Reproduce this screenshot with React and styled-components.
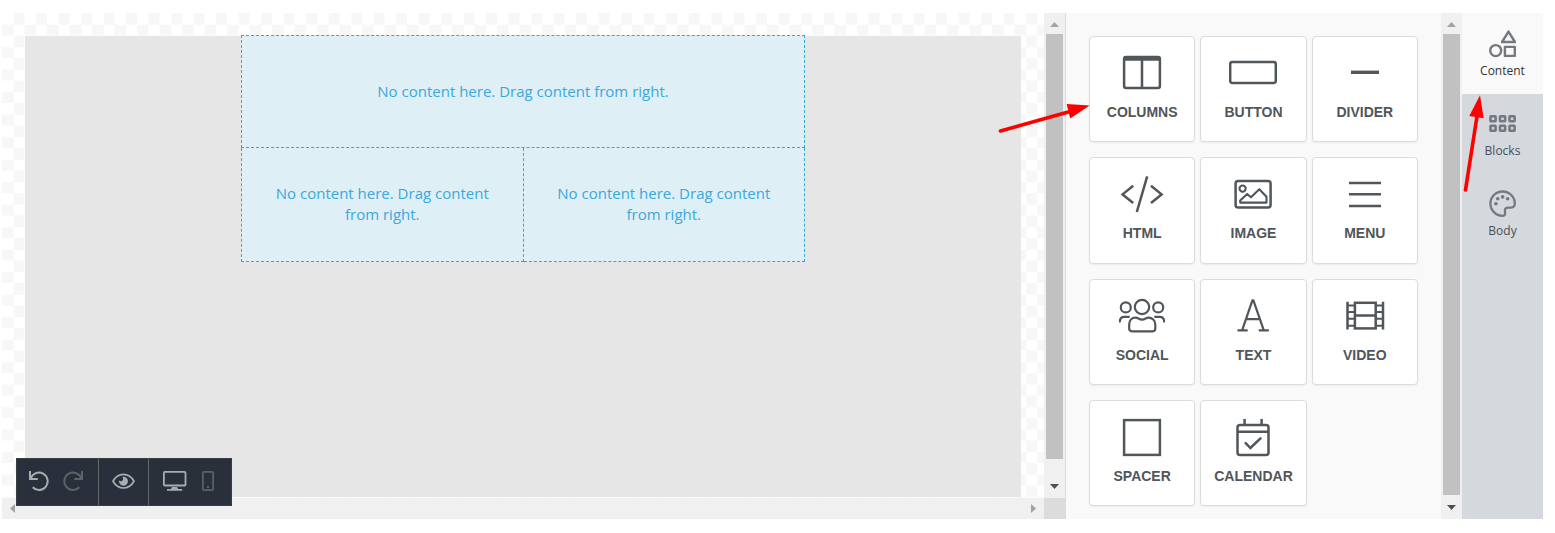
import { useState } from "react";
import styled, { createGlobalStyle, css } from "styled-components";

const GlobalStyle = createGlobalStyle`
  *, *::before, *::after {
    box-sizing: border-box;
  }

  body {
    margin: 0;
    background: #fff;
    font-family: "Open Sans", sans-serif;
  }

  button {
    margin: 0;
    padding: 0;
    border: none;
    background: none;
    font: inherit;
    color: inherit;
    cursor: pointer;
  }
`;

const Page = styled.div`
  min-height: 100vh;
  padding: 13px 12px 14px 2px;
  display: flex;
`;

const Editor = styled.div`
  position: relative;
  flex: 1;
  display: flex;
`;

const Preview = styled.main`
  flex: 1;
  min-width: 0;
  display: grid;
  grid-template-columns: 1fr 21px;
  grid-template-rows: 1fr 21px;
  border-right: 1px solid #dcdcdc;
`;

const Canvas = styled.div`
  padding: 23px 23px 1px;
  display: flex;
  background: conic-gradient(#f7f7f7 25%, #fff 0 50%, #f7f7f7 0 75%, #fff 0) 0 0 /
    calc(45px / 2) calc(45px / 2);
`;

const Sheet = styled.div`
  flex: 1;
  background: #e6e6e6;
`;

const Layout = styled.div`
  max-width: 564px;
  margin: -1px auto 0;
`;

const LayoutRow = styled.div`
  display: flex;
`;

const DropZone = styled.div`
  flex: 1;
  min-height: ${(props) => (props.$first ? "113px" : "114px")};
  padding: ${(props) => (props.$first ? "0 24px" : "0 24px 2px")};
  display: flex;
  align-items: center;
  justify-content: center;
  text-align: center;
  font-size: 15px;
  line-height: 21px;
  color: #3aa8dd;
  background: #dfeff6;
  border: 1px dashed #30aadc;
  border-width: ${(props) => (props.$first ? "1px 1px 1px 0" : "0 1px 1px 0")};

  &:first-child {
    border-left-width: 1px;
  }
`;

const Track = styled.div`
  display: flex;
  flex-direction: ${(props) => (props.$horizontal ? "row" : "column")};
  ${(props) => !props.$horizontal && "width: 21px;"}
  background: #f0f0f0;
`;

const ArrowBox = styled.span`
  width: 21px;
  height: 21px;
  display: flex;
  align-items: center;
  justify-content: center;
  color: ${(props) => (props.$active ? "#505050" : "#a3a3a3")};
`;

const Thumb = styled.div`
  flex: 1;
  margin: 0 2px ${(props) => props.$rest || 0}px;
  background: ${(props) => (props.$hidden ? "transparent" : "#c1c1c1")};
`;

const Corner = styled.div`
  background: #dcdcdc;
`;

const Panel = styled.aside`
  position: relative;
  width: 396px;
  display: flex;
  background: #f9f9f9;
`;

const Tools = styled.div`
  flex: 1;
  padding: 23px 23px 13px;
  display: grid;
  grid-template-columns: repeat(3, 1fr);
  grid-template-rows: repeat(4, 1fr);
  gap: 15px 5px;
`;

const ToolCard = styled.button`
  padding: 16px 0 18px;
  display: flex;
  flex-direction: column;
  align-items: center;
  gap: 9px;
  background: #fff;
  border: 1px solid #dcdcdc;
  border-radius: 4px;
  box-shadow: 0 1px 2px rgba(0, 0, 0, 0.06);
  color: #505659;
  cursor: grab;
`;

const ToolLabel = styled.span`
  font-family: "Liberation Sans", Arial, sans-serif;
  font-size: 14px;
  font-weight: 700;
  line-height: 20px;
`;

const Tabs = styled.nav`
  position: relative;
  width: 81px;
  background: #d5d8dc;
`;

const Tab = styled.button`
  width: 100%;
  padding: 17px 0 14px;
  display: flex;
  flex-direction: column;
  align-items: center;
  gap: 5px;
  font-size: 12px;
  line-height: 16px;
  color: #4a4f57;

  svg {
    color: #75787e;
  }

  ${(props) =>
    props.$active &&
    css`
      color: #333;
      background: #f9f9f9;
      box-shadow: 0 1px 0 #f9f9f9;
    `}
`;

const Toolbar = styled.div`
  position: absolute;
  left: 14px;
  bottom: 13px;
  height: 48px;
  display: flex;
  background: #2a303b;
  border: 1px solid #3b3d41;
`;

const ToolbarGroup = styled.div`
  display: flex;
  align-items: center;
  gap: ${(props) => props.$gap || 0}px;
  padding: ${(props) => props.$pad};

  & + & {
    border-left: 1px solid #66686a;
  }
`;

const IconButton = styled.button`
  display: flex;
  color: ${(props) => (props.$dim ? "#5f6266" : "#a9acb1")};
`;

const Pointer = styled.svg`
  position: absolute;
  z-index: 2;
  pointer-events: none;
  left: ${(props) => props.$left}px;
  top: ${(props) => props.$top}px;
`;

function ToolIcon({ children }) {
  return (
    <svg
      width="48"
      height="40"
      viewBox="0 0 48 40"
      fill="none"
      stroke="currentColor"
      strokeWidth="2.5"
      aria-hidden="true"
    >
      {children}
    </svg>
  );
}

const tools = [
  {
    label: "COLUMNS",
    icon: (
      <>
        <rect x="6.1" y="4.1" width="35.8" height="30.8" rx="2" />
        <path d="M6 5.6h36" strokeWidth="4.4" />
        <path d="M24 6v29" />
      </>
    ),
  },
  {
    label: "BUTTON",
    icon: <rect x="1.2" y="9.1" width="45.6" height="20.8" rx="2" />,
  },
  {
    label: "DIVIDER",
    icon: <path d="M10 19.3h28" strokeWidth="3.4" />,
  },
  {
    label: "HTML",
    icon: (
      <path d="M15.2 11.8L4.6 20.4l10.6 8.6M29.2 2.4L18.8 38M33 11.8l10.6 8.6L33 29" />
    ),
  },
  {
    label: "IMAGE",
    icon: (
      <>
        <rect x="6.6" y="7" width="35" height="26.6" rx="2.5" />
        <circle cx="13.6" cy="14.6" r="3.1" strokeWidth="2.1" />
        <path
          d="M11.2 28.6v-2l7-6.6 3.8 3.2 8.3-8 7.2 7.6v5.8z"
          strokeWidth="2.1"
          strokeLinejoin="round"
        />
      </>
    ),
  },
  {
    label: "MENU",
    icon: <path d="M8 9h32M8 20.3h32M8 32h32" />,
  },
  {
    label: "SOCIAL",
    icon: (
      <g strokeWidth="2.2" strokeLinecap="round">
        <circle cx="24" cy="11" r="7.2" />
        <circle cx="7.8" cy="11.4" r="5" />
        <circle cx="40.2" cy="11.4" r="5" />
        <path d="M11.2 32.6v-4.2c0-4 2.6-6.8 6.4-6.8 2.6 0 3.2 2 6.4 2s3.8-2 6.4-2c3.8 0 6.9 2.8 6.9 6.8v4.2c0 1.7-1 2.7-2.7 2.7H13.9c-1.7 0-2.7-1-2.7-2.7z" />
        <path d="M1.9 25.6c0-3 1.6-4.8 4.4-4.8h4.6M46.1 25.6c0-3-1.6-4.8-4.4-4.8h-4.6" />
      </g>
    ),
  },
  {
    label: "TEXT",
    icon: (
      <path
        d="M13.2 34.2L23.4 4.3h1L34.7 34.2M17.5 23.2h13M9.4 34.4h8.4M30.6 34.4H39"
        strokeWidth="2.2"
        strokeLinecap="round"
        strokeLinejoin="round"
      />
    ),
  },
  {
    label: "VIDEO",
    icon: (
      <>
        <rect x="13.9" y="6.8" width="20.8" height="25.6" />
        <path d="M14 19.4h21M6.5 5.8v27.6M42 5.8v27.6" />
        <path
          d="M6.5 9.4H14M6.5 16H14M6.5 22.8H14M6.5 29.8H14M35 9.4h7M35 16h7M35 22.8h7M35 29.8h7"
          strokeWidth="2"
        />
      </>
    ),
  },
  {
    label: "SPACER",
    icon: <rect x="6.1" y="3.1" width="35.8" height="34.8" />,
  },
  {
    label: "CALENDAR",
    icon: (
      <>
        <rect x="8.5" y="8" width="31" height="29.9" rx="2.5" />
        <path d="M8.5 14.8h31M15.6 2v6M32.6 2v6" />
        <path d="M16.7 26.2l4.7 4.8L31.5 21.4" strokeLinecap="round" />
      </>
    ),
  },
];

const tabs = [
  {
    label: "Content",
    icon: (
      <g strokeWidth="2.4" strokeLinejoin="round">
        <path d="M19.5 1.6L26 12H13z" />
        <circle cx="6.7" cy="20.6" r="5.5" />
        <rect x="15.9" y="16.9" width="9.9" height="9" />
      </g>
    ),
  },
  {
    label: "Blocks",
    icon: (
      <g strokeWidth="2.6">
        {[1.5, 11, 20.5].map((x) => (
          <g key={x}>
            <rect x={x} y="6.2" width="5.1" height="5.1" rx="0.5" />
            <rect x={x} y="15.7" width="5.1" height="5.1" rx="0.5" />
          </g>
        ))}
      </g>
    ),
  },
  {
    label: "Body",
    icon: (
      <>
        <path
          d="M13.6 1.5C6.8 1.5 1.4 6.9 1.4 13.6c0 6.6 5.3 12.2 12 12.2 2 0 3-1.3 2.7-3-.3-2-.6-3.1.2-4.1 1-1.2 2.5-1.1 4.500-1 3 .2 5-1.1 5-4.1 0-6.700-5.400-12.100-12.200-12.100z"
          strokeWidth="2.3"
        />
        <g fill="currentColor" stroke="none">
          <circle cx="6.9" cy="13.7" r="1.8" />
          <circle cx="8.7" cy="8.8" r="1.8" />
          <circle cx="13.6" cy="6.9" r="1.8" />
          <circle cx="18.6" cy="8.8" r="1.8" />
        </g>
      </>
    ),
  },
];

const arrowPaths = {
  up: "M1 9L5.5 4 10 9z",
  down: "M1 2h9L5.5 7z",
  left: "M8 1v9L3 5.5z",
  right: "M3 1v9l5-4.5z",
};

function ScrollArrow({ direction, active }) {
  return (
    <ArrowBox $active={active}>
      <svg width="11" height="11" viewBox="0 0 11 11" aria-hidden="true">
        <path d={arrowPaths[direction]} fill="currentColor" />
      </svg>
    </ArrowBox>
  );
}

function ScrollBar({ rest }) {
  return (
    <Track>
      <ScrollArrow direction="up" />
      <Thumb $rest={rest} />
      <ScrollArrow direction="down" active />
    </Track>
  );
}

function ResetArrow({ flip }) {
  return (
    <svg
      width="20"
      height="20"
      viewBox="0 0 20 20"
      fill="none"
      stroke="currentColor"
      strokeWidth="2"
      aria-hidden="true"
    >
      <g transform={flip ? "matrix(-1 0 0 1 20 0)" : undefined}>
        <path d="M1 0v8h7.8" />
        <path d="M1.8 7.2A8.7 8.7 0 1 1 3.7 16.3" />
      </g>
    </svg>
  );
}

export default function App() {
  const [activeTab, setActiveTab] = useState("Content");

  return (
    <>
      <GlobalStyle />
      <Page>
        <Editor>
          <Preview>
            <Canvas>
              <Sheet>
                <Layout>
                  <LayoutRow>
                    <DropZone $first>
                      No content here. Drag content from right.
                    </DropZone>
                  </LayoutRow>
                  <LayoutRow>
                    <DropZone>No content here. Drag content from right.</DropZone>
                    <DropZone>No content here. Drag content from right.</DropZone>
                  </LayoutRow>
                </Layout>
              </Sheet>
            </Canvas>
            <ScrollBar rest={18} />
            <Track $horizontal>
              <ScrollArrow direction="left" />
              <Thumb $hidden />
              <ScrollArrow direction="right" />
            </Track>
            <Corner />
          </Preview>

          <Panel>
            <Tools>
              {tools.map((tool) => (
                <ToolCard key={tool.label} type="button">
                  <ToolIcon>{tool.icon}</ToolIcon>
                  <ToolLabel>{tool.label}</ToolLabel>
                </ToolCard>
              ))}
            </Tools>
            <ScrollBar rest={3} />
            <Pointer $left={-68} $top={89} width="94" height="32" viewBox="0 0 94 32">
              <path d="M2.5 29L72 9.5" stroke="#f00" strokeWidth="3.6" strokeLinecap="round" />
              <path d="M68.6 2L91.7 3.5 72.2 16.5z" fill="#f00" />
            </Pointer>
          </Panel>

          <Tabs>
            {tabs.map((tab) => (
              <Tab
                key={tab.label}
                type="button"
                $active={activeTab === tab.label}
                onClick={() => setActiveTab(tab.label)}
              >
                <svg
                  width="27"
                  height="28"
                  viewBox="0 0 27 28"
                  fill="none"
                  stroke="currentColor"
                  aria-hidden="true"
                >
                  {tab.icon}
                </svg>
                {tab.label}
              </Tab>
            ))}
            <Pointer $left={1} $top={82} width="24" height="98" viewBox="0 0 24 98">
              <path d="M2.5 95L14.2 20" stroke="#f00" strokeWidth="3.6" strokeLinecap="round" />
              <path d="M17 .3L6.3 21l14.4 2.3z" fill="#f00" />
            </Pointer>
          </Tabs>

          <Toolbar>
            <ToolbarGroup $gap={14} $pad="0 15px 2px 12px">
              <IconButton type="button" aria-label="Undo">
                <ResetArrow />
              </IconButton>
              <IconButton type="button" aria-label="Redo" $dim>
                <ResetArrow flip />
              </IconButton>
            </ToolbarGroup>
            <ToolbarGroup $pad="0 12px 2px 13px">
              <IconButton type="button" aria-label="Preview">
                <svg width="24" height="20" viewBox="0 0 24 20" fill="none">
                  <path
                    d="M1 10.2C3.5 6 7 3.4 11.5 3.4S19.5 6 22 10.2C19.5 14.4 16 17 11.5 17S3.5 14.4 1 10.2z"
                    stroke="currentColor"
                    strokeWidth="1.7"
                    strokeLinejoin="round"
                  />
                  <path
                    d="M11.5 5.7a4.5 4.5 0 1 1-4.4 3.5 2.2 2.2 0 0 0 3.6-2.7 2 2 0 0 0-.5-.6z"
                    fill="currentColor"
                  />
                </svg>
              </IconButton>
            </ToolbarGroup>
            <ToolbarGroup $gap={15} $pad="0 17px 2px 14px">
              <IconButton type="button" aria-label="Desktop">
                <svg width="24" height="20" viewBox="0 0 24 20" fill="none">
                  <rect
                    x="0.9"
                    y="0.9"
                    width="21.6"
                    height="13.6"
                    rx="1"
                    stroke="currentColor"
                    strokeWidth="1.8"
                  />
                  <path d="M9 16h5l1.2 2h4v1.7H4V18h4z" fill="currentColor" />
                </svg>
              </IconButton>
              <IconButton type="button" aria-label="Mobile" $dim>
                <svg width="12" height="20" viewBox="0 0 12 20" fill="none">
                  <rect
                    x="0.9"
                    y="0.9"
                    width="10.2"
                    height="18.2"
                    rx="1.2"
                    stroke="currentColor"
                    strokeWidth="1.7"
                  />
                  <circle cx="6" cy="16" r="1.2" fill="currentColor" />
                </svg>
              </IconButton>
            </ToolbarGroup>
          </Toolbar>
        </Editor>
      </Page>
    </>
  );
}
